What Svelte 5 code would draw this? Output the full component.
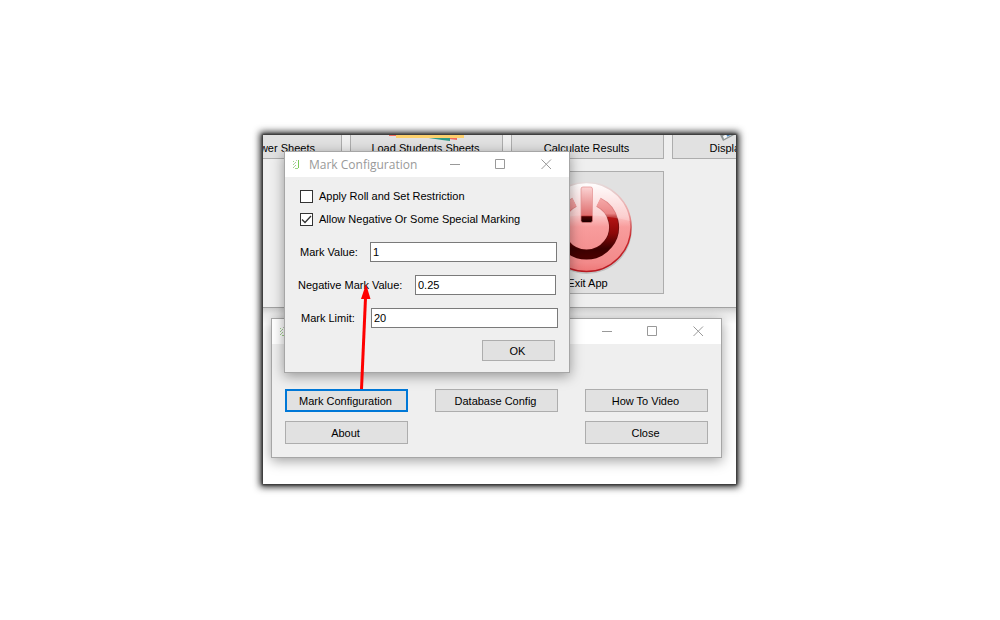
<script>
  let restrict = $state(false);
  let negative = $state(true);
  let markValue = $state('1');
  let negativeValue = $state('0.25');
  let markLimit = $state('20');

  const actions = [
    { label: 'Mark Configuration', focused: true },
    { label: 'Database Config' },
    { label: 'How To Video' },
    { label: 'About' },
    { label: 'Close', last: true }
  ];
</script>

{#snippet windowButtons()}
  <div class="controls">
    <button aria-label="Minimize"><svg width="11" height="11" viewBox="0 0 11 11"><path d="M1 5.500H11" /></svg></button>
    <button aria-label="Maximize"><svg width="11" height="11" viewBox="0 0 11 11"><path d="M.5 .5h9v9h-9z" /></svg></button>
    <button aria-label="Close window"><svg width="11" height="11" viewBox="0 0 11 11"><path d="M.5 .5l9.500 9.500M10 .5l-9.500 9.500" /></svg></button>
  </div>
{/snippet}

{#snippet appIcon()}
  <svg class="app-icon" width="8" height="9" viewBox="0 0 8 9">
    <path d="M6.500 0v8" stroke="#7cc95c" />
    <path d="M1 1.500h1M3 2.500h1M1 4.500h1M3 5.500h1M1 7.500h1M3 8.500h3" stroke="#9ed58a" />
    <path d="M2 3.500h1M4 .5h1M2 6.500h1" stroke="#b9c4b4" />
  </svg>
{/snippet}

<main>
  <div class="frame">
    <section class="app">
      <div class="tiles">
        <button class="tile">Load Answer Sheets</button>
        <button class="tile">
          <svg width="100" height="100" viewBox="0 0 100 100">
            <path d="M13 70h8v25h-8zM74 90h7v9l-8-1z" fill="#f0695c" />
            <path d="M46 96h28v4l-8-1z" fill="#2f9a86" />
            <path d="M20 60h68v37h-68z" fill="#fcd06c" />
          </svg>
          <span>Load Students Sheets</span>
        </button>
        <button class="tile">Calculate Results</button>
        <button class="tile">
          <svg width="100" height="100" viewBox="0 0 100 100">
            <path d="M22 94l16-7v6l-13 7z" fill="#8f9696" />
            <path d="M25 95l12-6v3l-11 6z" fill="#f4f8fa" />
            <path d="M29 95l5-3" stroke="#4c86bc" stroke-width="2" />
          </svg>
          <span>Display Results</span>
        </button>
        <button class="tile exit">
          <svg width="100" height="100" viewBox="0 0 100 100">
            <defs>
              <linearGradient id="disc" x2="0" y2="1">
                <stop offset="0" stop-color="#fff" />
                <stop offset=".38" stop-color="#fbc4c4" />
                <stop offset=".5" stop-color="#f89c9c" />
                <stop offset=".9" stop-color="#f28a8a" />
                <stop offset="1" stop-color="#ee7777" />
              </linearGradient>
              <linearGradient id="rim" x2="0" y2="1">
                <stop offset="0" stop-color="#e5dcdc" />
                <stop offset=".35" stop-color="#eba0a0" />
                <stop offset=".6" stop-color="#c92a2e" />
                <stop offset="1" stop-color="#b81820" />
              </linearGradient>
              <linearGradient id="ring" gradientUnits="userSpaceOnUse" x1="0" y1="20" x2="0" y2="82">
                <stop offset="0" stop-color="#f49a9a" />
                <stop offset=".28" stop-color="#e66a6a" />
                <stop offset=".34" stop-color="#b41414" />
                <stop offset=".6" stop-color="#8d0808" />
                <stop offset=".85" stop-color="#3a0000" />
                <stop offset="1" stop-color="#4a0000" />
              </linearGradient>
              <linearGradient id="edge" gradientUnits="userSpaceOnUse" x1="0" y1="20" x2="0" y2="82">
                <stop offset="0" stop-color="#dc7777" />
                <stop offset=".28" stop-color="#d05858" />
                <stop offset=".4" stop-color="#751414" />
                <stop offset="1" stop-color="#400000" />
              </linearGradient>
              <linearGradient id="stem" x2="0" y2="1">
                <stop offset="0" stop-color="#fbc9c9" />
                <stop offset=".8" stop-color="#d84a4a" />
                <stop offset=".84" stop-color="#4a0000" />
                <stop offset="1" stop-color="#180000" />
              </linearGradient>
            </defs>
            <ellipse cx="49" cy="53" rx="45" ry="45" fill="#000" opacity=".14" />
            <circle cx="48.500" cy="51" r="44.500" fill="url(#disc)" stroke="url(#rim)" stroke-width="1.500" />
            <path d="M36.500 26.300A27.500 27.500 0 1 0 60.500 26.300" fill="none" stroke="url(#edge)" stroke-width="10" />
            <path d="M36.500 26.300A27.500 27.500 0 1 0 60.500 26.300" fill="none" stroke="url(#ring)" stroke-width="8.500" />
            <rect x="43" y="11" width="11.500" height="35.500" rx="2" fill="url(#stem)" stroke="#dc7777" stroke-width=".7" />
            <path d="M5 45Q49 34 92 45A44 44 0 0 0 5 45" fill="#fff" opacity=".2" />
          </svg>
          <span>Exit App</span>
        </button>
      </div>
    </section>
    <div class="desk"></div>

    <section class="window settings">
      <header>{@render appIcon()}<span class="title"></span>{@render windowButtons()}</header>
      <div class="actions">
        {#each actions as action}
          <button class="push" class:focused={action.focused} class:last={action.last}>{action.label}</button>
        {/each}
      </div>
    </section>

    <section class="window dialog">
      <header>{@render appIcon()}<span class="title">Mark Configuration</span>{@render windowButtons()}</header>
      <form onsubmit={(e) => e.preventDefault()}>
        <div class="checks">
          <label><input type="checkbox" bind:checked={restrict} />Apply Roll and Set Restriction</label>
          <label><input type="checkbox" bind:checked={negative} />Allow Negative Or Some Special Marking</label>
        </div>
        <div class="fields">
          <div class="field value"><label for="mark-value">Mark Value:</label><input id="mark-value" type="text" bind:value={markValue} /></div>
          <div class="field negative"><label for="negative-value">Negative Mark Value:</label><input id="negative-value" type="text" bind:value={negativeValue} /></div>
          <div class="field limit"><label for="mark-limit">Mark Limit:</label><input id="mark-limit" type="text" bind:value={markLimit} /></div>
        </div>
        <button class="push ok">OK</button>
      </form>
    </section>

    <svg class="arrow" width="12" height="106" viewBox="0 0 12 106" aria-hidden="true">
      <path d="M1.500 105L5.500 14" stroke="#fe0000" stroke-width="3" />
      <path d="M6 0L10.500 15H1z" fill="#fe0000" />
    </svg>
  </div>
</main>

<style>
  :global(body) {
    margin: 0;
    background: #fff;
  }

  * {
    box-sizing: border-box;
  }

  main {
    display: flex;
    align-items: center;
    justify-content: center;
    min-height: 100vh;
    padding: 0 1px 1px 0;
    color: #000;
    font: 11px/14px "Liberation Sans", Arial, sans-serif;
  }

  button,
  input {
    margin: 0;
    border-radius: 0;
    color: inherit;
    font: inherit;
  }

  .frame {
    position: relative;
    width: 100%;
    max-width: 473px;
    background: #fff;
    box-shadow: 0 0 2px 1px #333, 0 0 7px 3px rgba(0, 0, 0, 0.85);
  }

  .app {
    display: flex;
    padding-bottom: 13px;
    overflow: hidden;
    border-bottom: 1px solid #a2a2a2;
    background: #efefef;
  }

  .desk {
    height: 176px;
    background: linear-gradient(#cfcfcf, #ebebeb 6px, #fff 16px);
  }

  .tiles {
    display: grid;
    grid-template-columns: repeat(4, 153px);
    grid-auto-rows: 123px;
    gap: 12px 8px;
    margin: -99px 0 0 -74px;
  }

  .tile {
    display: flex;
    flex-direction: column;
    align-items: center;
    justify-content: flex-end;
    padding: 0 2px 3px 0;
    border: 1px solid #adadad;
    background: #e1e1e1;
    white-space: nowrap;
  }

  .tile svg {
    flex: none;
  }

  .tile.exit {
    grid-column: 3;
    padding-right: 0;
  }

  .window {
    position: absolute;
    border: 1px solid #a6a6a6;
    background: #efefef;
    box-shadow: 0 3px 12px rgba(0, 0, 0, 0.38);
  }

  .settings {
    top: 183px;
    left: 8px;
    width: 451px;
  }

  .dialog {
    top: 16px;
    left: 21px;
    width: 286px;
  }

  header {
    display: flex;
    align-items: center;
    height: 25px;
    padding-left: 7px;
    background: #fff;
    color: #999;
    font: 12px/16px "Open Sans", "Noto Sans", sans-serif;
  }

  .app-icon {
    flex: none;
    margin-right: 9px;
  }

  .title {
    flex: 1;
    white-space: nowrap;
  }

  .controls {
    display: flex;
  }

  .controls button {
    display: grid;
    place-items: center;
    width: 46px;
    height: 25px;
    padding: 0;
    border: 0;
    background: none;
  }

  .controls svg,
  .app-icon {
    fill: none;
    stroke: #999;
  }

  .actions {
    display: grid;
    grid-template-columns: repeat(3, 1fr);
    gap: 9px 27px;
    padding: 45px 13px 13px;
  }

  .push {
    height: 23px;
    padding: 0 2px 0 0;
    border: 1px solid #adadad;
    background: #e1e1e1;
  }

  .focused {
    border: 2px solid #0078d7;
  }

  .last {
    grid-column: 3;
  }

  form {
    display: flex;
    flex-direction: column;
    padding: 12px 11px 11px;
  }

  .checks {
    display: grid;
    gap: 9px;
    padding-left: 4px;
  }

  .checks label {
    display: flex;
    align-items: center;
    gap: 6px;
    white-space: nowrap;
  }

  .checks input {
    appearance: none;
    width: 13px;
    height: 13px;
    border: 1px solid #333;
    background: #fff;
  }

  .checks input:checked {
    background: #fff url("data:image/svg+xml,%3Csvg xmlns='http://www.w3.org/2000/svg' viewBox='0 0 11 11'%3E%3Cpath d='M1 5.500l3 3 6-6.500' fill='none' stroke='%23333' stroke-width='1.300'/%3E%3C/svg%3E");
  }

  .fields {
    display: grid;
    grid-template-columns: minmax(0, 1fr);
    gap: 13px;
    margin-top: 16px;
  }

  .field {
    display: flex;
    align-items: center;
    white-space: nowrap;
  }

  .field label {
    flex: none;
    width: 70px;
  }

  .field input {
    flex: 1;
    min-width: 0;
    height: 20px;
    padding: 0 2px;
    border: 1px solid #7a7a7a;
    background: #fff;
  }

  .value {
    padding: 0 1px 0 4px;
  }

  .negative {
    padding: 0 2px;
  }

  .negative label {
    width: 117px;
  }

  .limit {
    padding-left: 5px;
  }

  .ok {
    align-self: flex-end;
    width: 73px;
    height: 21px;
    margin: 12px 3px 0 0;
  }

  .arrow {
    position: absolute;
    top: 149px;
    left: 97px;
  }
</style>
